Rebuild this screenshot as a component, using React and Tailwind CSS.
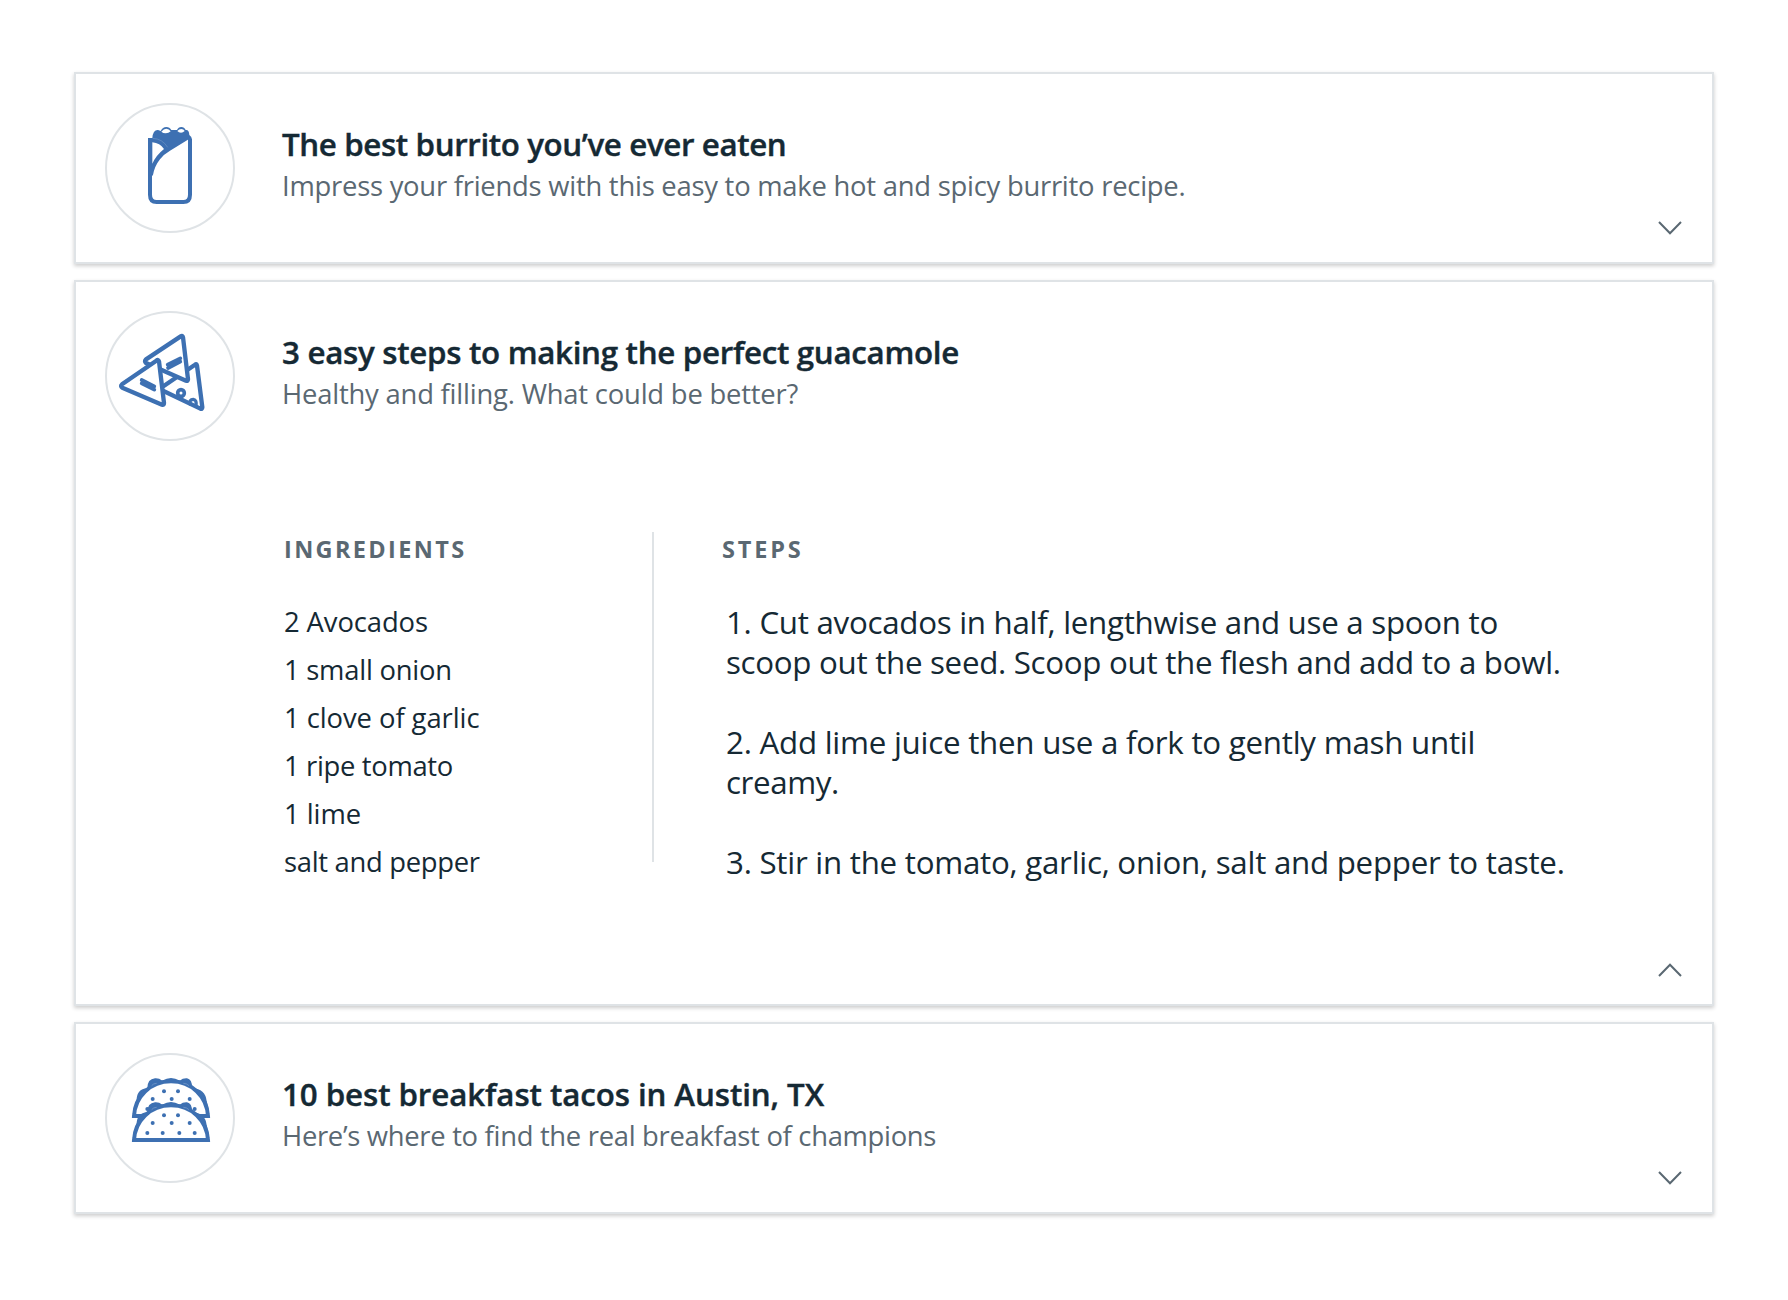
const BLUE = "#3d70b2";

function BurritoIcon() {
  return (
    <svg viewBox="135 129 390 390" className="size-[130px] shrink-0" fill="none">
      <path
        d="M264 234H277Q279 209 294 210Q299 211 302 213Q308 201 319 201Q329 201 334 210H351Q355 201 364 201Q373 201 377 210Q387 208 388 225Q396 230 396 240L386 238L330 272Q312 282 300 298Q284 318 279 345L264 360Z"
        fill={BLUE}
      />
      <path d="M277 247Q300 249 312 267Q288 286 277 311Z" fill="#fff" />
      <path d="M304 215Q311 206 319 206Q327 206 332 214Q326 220 317 220Q309 220 304 215Z" fill="#fff" />
      <path d="M352 213Q357 207 364 207Q371 207 374 213Q369 218 363 218Q356 218 352 213Z" fill="#fff" />
      <path d="M278 235Q307 236 323 262" stroke="#7d9fcb" strokeWidth="1.5" />
      <path d="M270 240V404Q270 426 290 426H370Q390 426 390 404V236" stroke={BLUE} strokeWidth="12" />
    </svg>
  );
}

function ChipsIcon() {
  return (
    <svg
      viewBox="135 123 390 390"
      className="size-[130px] shrink-0"
      fill="none"
      stroke={BLUE}
      strokeWidth="13"
      strokeLinejoin="round"
      strokeLinecap="round"
    >
      <path d="M298 357L405 284Q410 280 411 287L427 412Q427 418 421 416Z" fill="#fff" />
      <circle cx="363" cy="369" r="10" strokeWidth="11" />
      <path d="M390 402Q387 389 400 388Q411 389 408 409" strokeWidth="10" />
      <path d="M258 268L362 199Q368 195 369 202L384 328Q384 334 378 332L258 279Q252 274 258 268Z" fill="#fff" />
      <path d="M323 284L361 265M324 294L361 275" strokeWidth="11" />
      <path d="M186 343L289 272Q295 267 297 274L312 399Q312 406 306 404L187 353Q180 348 186 343Z" fill="#fff" />
      <path d="M245 330L283 349M245 340L283 359" strokeWidth="11" />
    </svg>
  );
}

function Taco() {
  return (
    <>
      <path
        d="M218 384L230 344Q229 309 262 307Q262 279 285 277Q297 276 307 284Q333 268 359 284Q369 276 381 277Q396 279 397 307Q436 308 440 346L448 384Z"
        fill={BLUE}
      />
      <path d="M222 390C225 333 270 286 333 286S441 333 444 390Z" fill="#fff" stroke={BLUE} strokeWidth="12" />
      <path d="M275 299Q280 292 290 292M370 292Q380 292 387 299" stroke="#7d9fcb" strokeWidth="2" />
      <g fill={BLUE}>
        <circle cx="312" cy="316" r="6" />
        <circle cx="354" cy="316" r="6" />
        <circle cx="278" cy="339" r="6" />
        <circle cx="335" cy="339" r="6" />
        <circle cx="389" cy="339" r="6" />
        <circle cx="262" cy="369" r="6" />
        <circle cx="308" cy="369" r="6" />
        <circle cx="358" cy="369" r="6" />
        <circle cx="404" cy="369" r="6" />
      </g>
    </>
  );
}

function TacosIcon() {
  return (
    <svg viewBox="135 129 390 390" className="size-[130px] shrink-0" fill="none">
      <g transform="translate(0 -72)">
        <Taco />
      </g>
      <Taco />
    </svg>
  );
}

function Chevron({ up }) {
  return (
    <svg
      viewBox="0 0 24 14"
      className="absolute right-[30.5px] bottom-[27px] h-[14px] w-6"
      fill="none"
      stroke="#5a6872"
      strokeWidth="2"
    >
      <path d={up ? "M1 13L12 1.8L23 13" : "M1 1L12 12.2L23 1"} />
    </svg>
  );
}

function Card({ icon, title, titleClass, subtitle, subtitleClass, open, children }) {
  return (
    <section className="relative border-2 border-[#dfe3e6] bg-white p-[29px] shadow-[0_2px_4px_rgba(0,0,0,0.2)]">
      <header className="flex h-[130px]">
        <div className="flex size-[130px] shrink-0 items-center justify-center rounded-full border-2 border-[#dfe3e6]">
          {icon}
        </div>
        <div className="ml-[47px] pt-[21px] whitespace-nowrap">
          <h2
            className={`text-[31.3px] leading-10 font-semibold text-[#152934] [-webkit-text-stroke:0.4px_#152934] ${titleClass}`}
          >
            {title}
          </h2>
          <p className={`mt-0.5 text-[27.4px] leading-10 text-[#5a6872] ${subtitleClass}`}>{subtitle}</p>
        </div>
      </header>
      {children}
      <Chevron up={open} />
    </section>
  );
}

const INGREDIENTS = [
  { name: "2 Avocados", tracking: "tracking-[-0.1px]" },
  { name: "1 small onion", tracking: "tracking-[-0.24px]" },
  { name: "1 clove of garlic", tracking: "tracking-[-0.06px]" },
  { name: "1 ripe tomato", tracking: "tracking-[-0.33px]" },
  { name: "1 lime", tracking: "tracking-[-0.05px]" },
  { name: "salt and pepper", tracking: "tracking-[-0.3px]" },
];

export default function App() {
  return (
    <main className="flex h-[1300px] w-[1788px] flex-col gap-4 bg-white px-[74px] pt-[72px] font-['Open_Sans',sans-serif]">
      <Card
        icon={<BurritoIcon />}
        title="The best burrito you’ve ever eaten"
        titleClass="tracking-[-0.38px]"
        subtitle="Impress your friends with this easy to make hot and spicy burrito recipe."
        subtitleClass="tracking-[-0.24px]"
      />
      <Card
        icon={<ChipsIcon />}
        title="3 easy steps to making the perfect guacamole"
        titleClass="tracking-[-0.3px]"
        subtitle="Healthy and filling. What could be better?"
        subtitleClass="tracking-[-0.2px]"
        open
      >
        <div className="flex h-[534px] pt-[91px] pl-[179px] text-[#152934]">
          <div className="h-[330px] w-[370px] shrink-0 border-r-2 border-[#dfe3e6]">
            <h3 className="-mt-px text-[23.5px] leading-9 font-bold tracking-[2.35px] text-[#5a6872]">INGREDIENTS</h3>
            <ul className="mt-[31px] text-[27.4px] leading-12">
              {INGREDIENTS.map(({ name, tracking }) => (
                <li key={name} className={tracking}>
                  {name}
                </li>
              ))}
            </ul>
          </div>
          <div className="ml-[68px] whitespace-nowrap">
            <h3 className="-mt-px text-[23.5px] leading-9 font-bold tracking-[2.85px] text-[#5a6872]">STEPS</h3>
            <div className="mt-[35px] ml-[4px] flex flex-col gap-10 text-[31.3px] leading-10">
              <p>
                <span className="block tracking-[-0.28px]">1. Cut avocados in half, lengthwise and use a spoon to</span>
                <span className="block tracking-[-0.3px]">scoop out the seed. Scoop out the flesh and add to a bowl.</span>
              </p>
              <p>
                <span className="block tracking-[-0.25px]">2. Add lime juice then use a fork to gently mash until</span>
                <span className="block tracking-[-0.4px]">creamy.</span>
              </p>
              <p className="tracking-[-0.26px]">3. Stir in the tomato, garlic, onion, salt and pepper to taste.</p>
            </div>
          </div>
        </div>
      </Card>
      <Card
        icon={<TacosIcon />}
        title="10 best breakfast tacos in Austin, TX"
        titleClass="tracking-[-0.09px]"
        subtitle="Here’s where to find the real breakfast of champions"
        subtitleClass="tracking-[-0.3px]"
      />
    </main>
  );
}
